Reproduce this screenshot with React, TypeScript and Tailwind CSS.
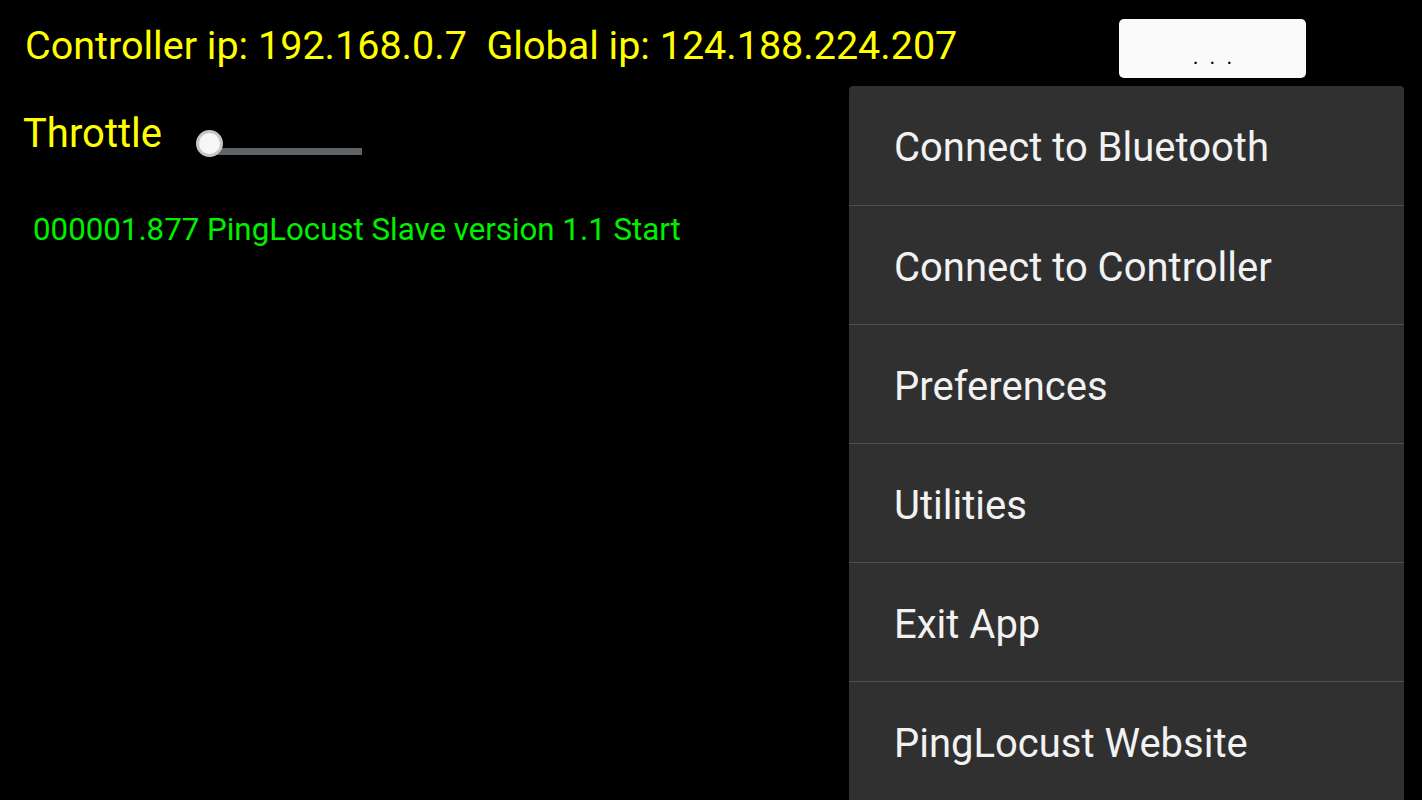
import { useState } from 'react';

const menuItems = [
  'Connect to Bluetooth',
  'Connect to Controller',
  'Preferences',
  'Utilities',
  'Exit App',
  'PingLocust Website',
];

function ThrottleSlider({ value }: { value: number }) {
  // value 0..1, track is 152px wide
  return (
    <div className="relative w-[166px] h-[30px]">
      <div className="absolute left-[14px] right-0 top-[20px] h-[7px] bg-[#5f6366]" />
      <div
        className="absolute top-[2px] w-[27px] h-[27px] rounded-full bg-[#f6f6f6] border-[3px] border-[#c4c6c7]"
        style={{ left: `${value * 152}px` }}
      />
    </div>
  );
}

export default function App() {
  const [throttle] = useState(0);

  return (
    <div className="relative w-[1422px] h-[800px] bg-black overflow-hidden font-['Roboto',sans-serif]">
      {/* Top bar */}
      <div className="flex items-start">
        <p className="mt-[26px] ml-[25px] text-[39.5px] leading-[40px] text-[#ffff00] whitespace-pre">
          Controller ip: 192.168.0.7  Global ip: 124.188.224.207
        </p>
        <button className="ml-auto mr-[116px] mt-[19px] w-[187px] h-[59px] rounded-[5px] bg-[#fafafa] flex items-end justify-center pb-[10px] text-[22px] leading-[22px] text-black tracking-[11px] pl-[11px]">
          ...
        </button>
      </div>

      {/* Throttle */}
      <div className="flex items-start mt-[36px] ml-[23px]">
        <span className="text-[40px] leading-[40px] text-[#ffff00]">Throttle</span>
        <div className="ml-[34px] mt-[14px]">
          <ThrottleSlider value={throttle} />
        </div>
      </div>

      {/* Log */}
      <p className="mt-[56px] ml-[33px] text-[31.25px] leading-[31px] text-[#00f000]">
        000001.877 PingLocust Slave version 1.1 Start
      </p>

      {/* Overflow menu */}
      <div className="absolute left-[849px] top-[86px] w-[555px] h-[760px] bg-[#303030] rounded-t-[4px] shadow-[0_0_4px_rgba(0,0,0,0.6)]">
        {menuItems.map((item, i) => (
          <div
            key={item}
            className={`h-[119px] flex items-center pl-[45px] pt-[5px] text-[40px] text-[#f2f2f2] ${i > 0 ? 'border-t border-[#4f4f4f]' : ''}`}
          >
            {item}
          </div>
        ))}
      </div>
    </div>
  );
}
